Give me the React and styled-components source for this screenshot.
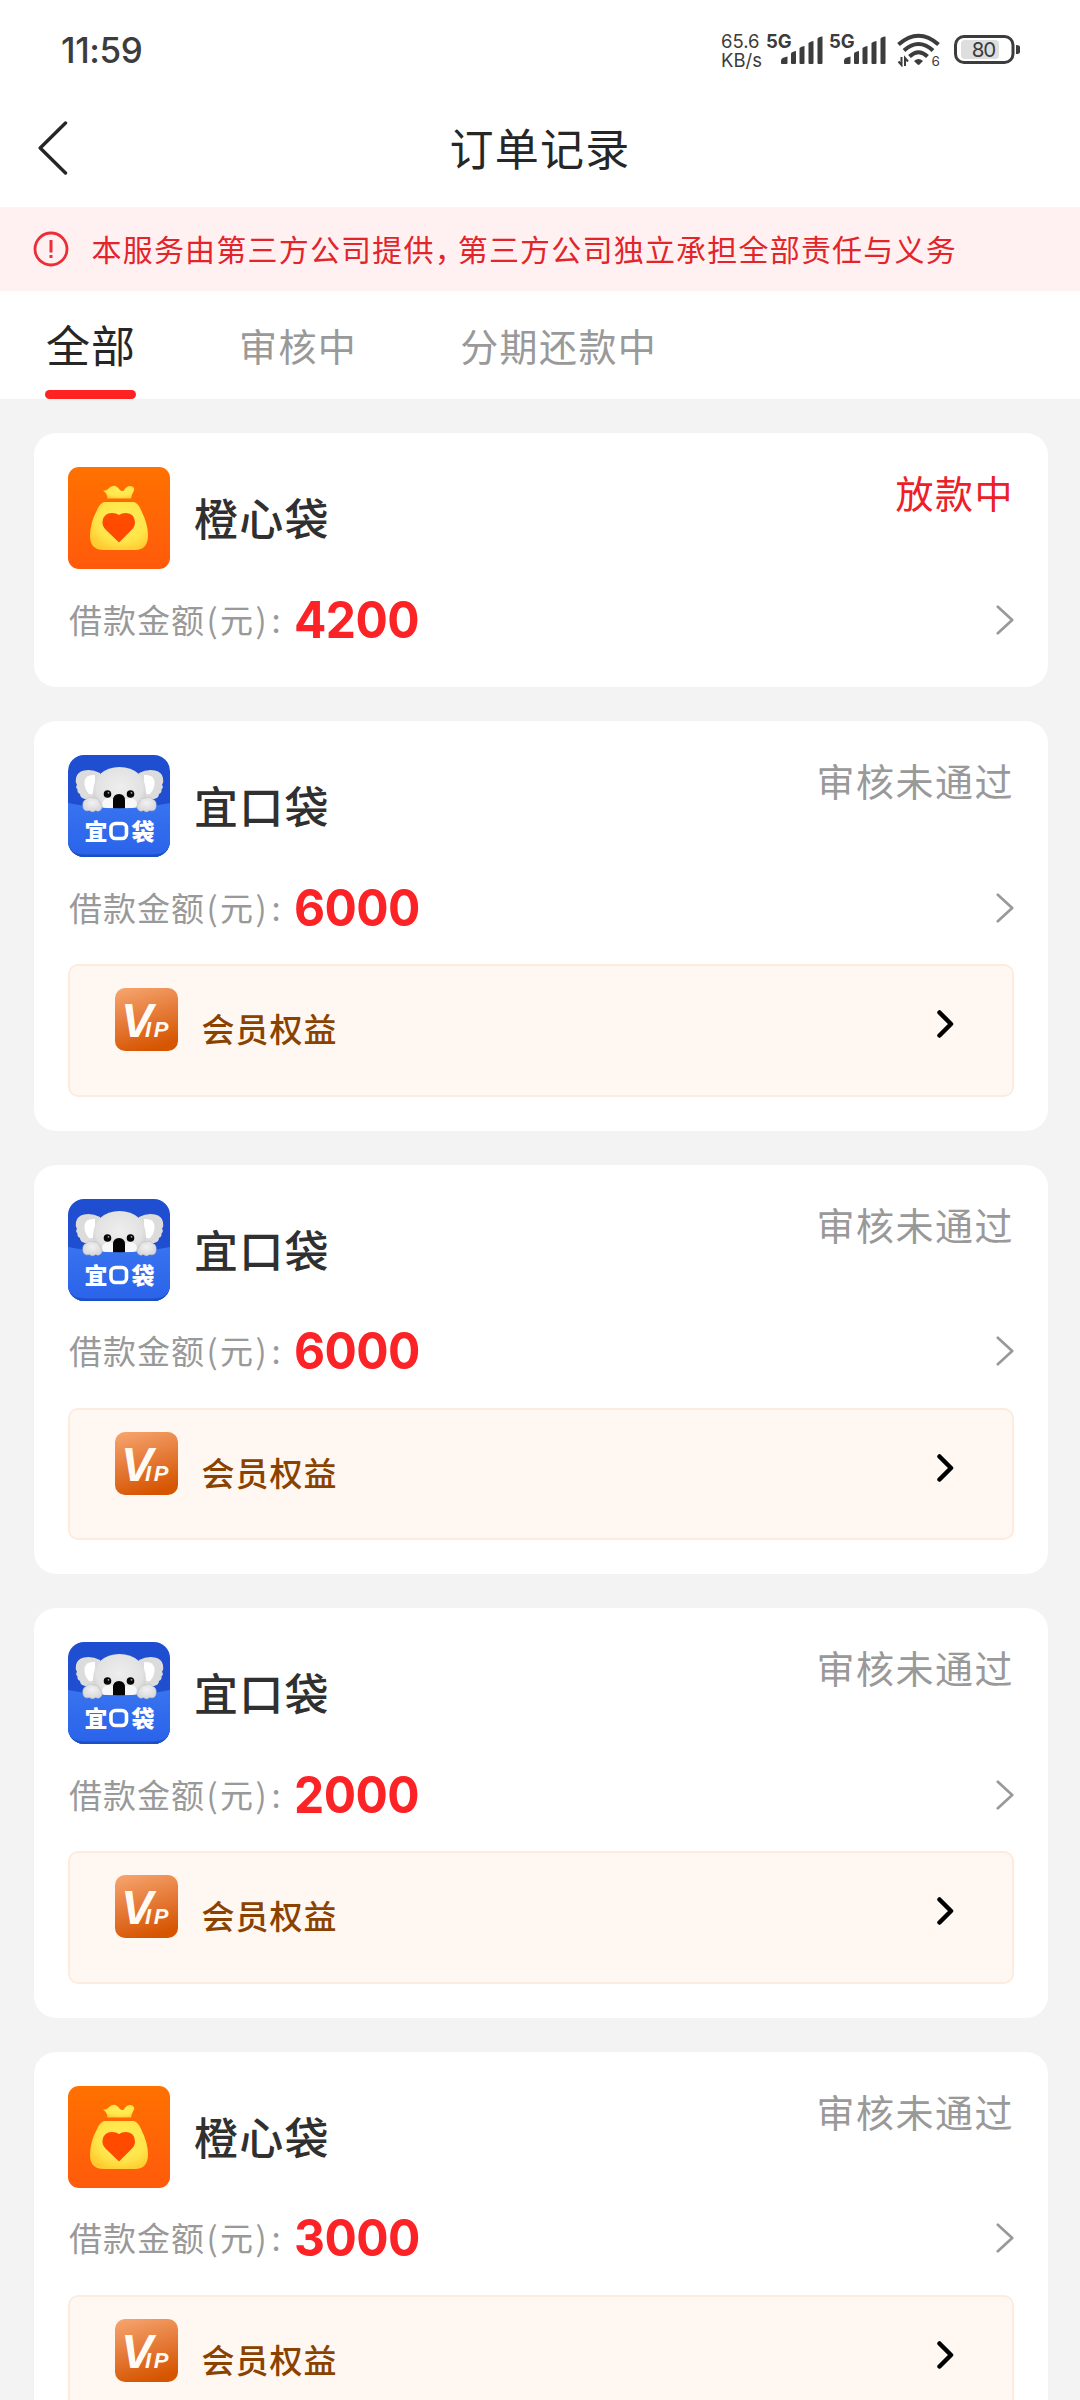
import React, { useState } from "react";
import styled, { createGlobalStyle } from "styled-components";

const tabs = ["全部", "审核中", "分期还款中"];

const orders = [
  { id: 1, app: "orange", name: "橙心袋", status: "放款中", active: true, amount: 4200, vip: false },
  { id: 2, app: "koala", name: "宜口袋", status: "审核未通过", amount: 6000, vip: true },
  { id: 3, app: "koala", name: "宜口袋", status: "审核未通过", amount: 6000, vip: true },
  { id: 4, app: "koala", name: "宜口袋", status: "审核未通过", amount: 2000, vip: true },
  { id: 5, app: "orange", name: "橙心袋", status: "审核未通过", amount: 3000, vip: true },
];

const SignalIcon = () => (
  <svg width="43" height="28" viewBox="0 0 43 28" fill="#3c3c3c">
    <path d="M0 27v-2.500q0-3 6.500-4v6.500q0 1-1 1h-4.500q-1 0-1-1z" />
    <path d="M10 17.500q0-1.500 5-2.500v12q0 1-1 1h-3q-1 0-1-1z" />
    <path d="M18.500 12.500q0-1.500 5-2.500v17q0 1-1 1h-3q-1 0-1-1z" />
    <path d="M27.500 7.500q0-1.500 5-2.500v22q0 1-1 1h-3q-1 0-1-1z" />
    <path d="M36.500 3q0-2 5-2.500v26.500q0 1-1 1h-3q-1 0-1-1z" />
  </svg>
);

const WifiIcon = () => (
  <svg width="44" height="34" viewBox="0 0 44 34" fill="none" stroke="#3c3c3c">
    <path d="M1.500 11.500q20-17.500 40 0" strokeWidth="4" />
    <path d="M7 17.500q14.500-13 29 0" strokeWidth="4" />
    <path d="M12.500 23.500q9-8.500 18 0" strokeWidth="4" />
    <path d="M17 28q4.500-4 9 0l-3.500 3.500q-1 .8-2 0z" fill="#3c3c3c" stroke="none" />
    <path d="M4.500 24v8l-3-3.500M8 33v-8l3 3.500" strokeWidth="2" />
    <text x="34.500" y="32.500" fontSize="13.500" fontFamily="Inter, sans-serif" fill="#3c3c3c" stroke="none">6</text>
  </svg>
);

const BatteryIcon = () => (
  <svg width="67" height="29" viewBox="0 0 67 29">
    <rect x="1.500" y="1.500" width="57.500" height="26" rx="8.500" fill="none" stroke="#3c3c3c" strokeWidth="3" />
    <rect x="7" y="5" width="38" height="19" rx="4" fill="#dedede" />
    <path d="M62 10q4 0 4 2v5q0 2-4 2z" fill="#3c3c3c" />
    <text x="29.500" y="22" textAnchor="middle" fontSize="20.500" letterSpacing="-1" fontFamily="Inter, sans-serif" fill="#3c3c3c">80</text>
  </svg>
);

const BackIcon = () => (
  <svg width="30" height="54" viewBox="0 0 30 54" fill="none" stroke="#262626" strokeWidth="3.400" strokeLinecap="round" strokeLinejoin="round">
    <path d="M27.500 2L2.200 27L27.500 52" />
  </svg>
);

const NoticeIcon = () => (
  <svg width="36" height="36" viewBox="0 0 36 36" fill="none" stroke="#ec2f36">
    <circle cx="18" cy="18" r="16" strokeWidth="2.800" />
    <path d="M18 9v12.500" strokeWidth="3" />
    <path d="M18 24v3" strokeWidth="3" />
  </svg>
);

const RowArrow = () => (
  <svg width="18" height="30" viewBox="0 0 18 30" fill="none" stroke="#999" strokeWidth="2.700" strokeLinecap="round" strokeLinejoin="round">
    <path d="M1.800 1.800L16.200 15L1.800 28.200" />
  </svg>
);

const VipArrow = () => (
  <svg width="18" height="30" viewBox="0 0 18 30" fill="none" stroke="#000" strokeWidth="4.500" strokeLinecap="round" strokeLinejoin="round">
    <path d="M3.500 3.500L15 15L3.500 26.500" />
  </svg>
);

const OrangeLogo = () => (
  <svg width="102" height="102" viewBox="0 0 102 102">
    <defs>
      <linearGradient id="orangeBg" x1="0" y1="0" x2="0" y2="1">
        <stop offset="0" stopColor="#ff7100" />
        <stop offset="1" stopColor="#ff5a0c" />
      </linearGradient>
      <radialGradient id="orangeBag" cx="0.55" cy="0.4" r="0.65">
        <stop offset="0" stopColor="#fff05a" />
        <stop offset="0.65" stopColor="#ffe54a" />
        <stop offset="1" stopColor="#ffcb30" />
      </radialGradient>
    </defs>
    <rect width="102" height="102" rx="11" fill="url(#orangeBg)" />
    <path d="M35 23.500Q38 24 40 22Q44 18 47.500 19Q50 20 51.500 22.500Q53 24.500 55.500 24Q57.500 20 61 19Q64.500 18.500 66 21Q67 23 65 25.500Q63.500 28 63 31.500H39.500Q39.500 27 35 23.500Z" fill="url(#orangeBag)" />
    <path d="M36 35H66Q70 36 73 43Q80 57 80 68Q80 83 67 83H36Q22 83 22 69Q22 56 29 43Q32 36 36 35Z" fill="url(#orangeBag)" />
    <path d="M51 75.500L38 63Q34 59 34.500 54.500Q35.500 46 44 46Q48.500 46.200 51 48Q53.500 46.200 58 46Q66.500 46.500 67 55Q67 59.500 64 62.500Z" fill="#ff4a00" />
  </svg>
);

const KoalaLogo = () => (
  <svg width="102" height="102" viewBox="0 0 102 102">
    <defs>
      <linearGradient id="koalaFront" x1="0" y1="0" x2="0" y2="1">
        <stop offset="0" stopColor="#3873ef" />
        <stop offset="1" stopColor="#2a63ea" />
      </linearGradient>
      <radialGradient id="koalaFace" cx="0.5" cy="0.45" r="0.62">
        <stop offset="0" stopColor="#eeeeee" />
        <stop offset="0.7" stopColor="#e2e2e2" />
        <stop offset="1" stopColor="#c6c6c8" />
      </radialGradient>
      <radialGradient id="koalaHand" cx="0.5" cy="0.4" r="0.6">
        <stop offset="0" stopColor="#f2f2f2" />
        <stop offset="1" stopColor="#d6d6da" />
      </radialGradient>
      <clipPath id="koalaClip">
        <rect width="102" height="102" rx="16" />
      </clipPath>
    </defs>
    <g clipPath="url(#koalaClip)">
      <rect width="102" height="102" fill="#1f4ed1" />
      <path d="M32 18Q24 14 16 15.500Q9 17 8 23Q7 27 9 30Q7 32 9.500 34.500Q9 37.500 12 39Q12 43 17 44H34Z" fill="#dcdcdc" />
      <path d="M71 18Q79 14 87 15.500Q94 17 95 23Q96 27 94 30Q96 32 93.500 34.500Q94 37.500 91 39Q91 43 86 44H69Z" fill="#dcdcdc" />
      <path d="M27 20Q18 19 16.500 26Q16 34 21 39Q25 40 27 36Z" fill="#fff" />
      <path d="M76 20Q85 19 86.500 26Q87 34 82 39Q78 40 76 36Z" fill="#fff" />
      <path d="M25 38Q25 26 32 19Q40 12 51.500 12Q63 12 71 19Q78 26 78 38Q78 50 70 56H33Q25 50 25 38Z" fill="url(#koalaFace)" />
      <ellipse cx="41" cy="49" rx="7" ry="6" fill="#f8f8f8" />
      <ellipse cx="62" cy="49" rx="7" ry="6" fill="#f8f8f8" />
      <circle cx="39.500" cy="39" r="3.800" fill="#080808" />
      <circle cx="62.500" cy="39" r="3.800" fill="#080808" />
      <circle cx="40.500" cy="37.800" r="0.900" fill="#aaa" />
      <circle cx="63.500" cy="37.800" r="0.900" fill="#aaa" />
      <path d="M45 55V45.500Q45 39 51 39Q57 39 57 45.500V55Z" fill="#050505" />
      <path d="M0 48Q51 58.500 102 48V102H0Z" fill="url(#koalaFront)" />
      <path d="M0 88Q2 99.500 17 99.500H85Q100 99.500 102 88V102H0Z" fill="#1d4fc4" />
      <g fill="url(#koalaHand)" stroke="#bfc0c6" strokeWidth="0.600">
        <path d="M15 52Q14 46 18 44.500Q21 40.500 25 43Q30 42.500 31.500 47Q35 50 33.500 54Q31 57.500 27.500 55.500Q24.500 58 21.500 55.500Q16 57 15 52Z" />
        <path d="M88 52Q89 46 85 44.500Q82 40.500 78 43Q73 42.500 71.500 47Q68 50 69.500 54Q72 57.500 75.500 55.500Q78.500 58 81.500 55.500Q87 57 88 52Z" />
      </g>
      <g fontFamily="'Noto Sans CJK SC', sans-serif" fontWeight="900" fontSize="23" fill="#fff" textAnchor="middle">
        <text x="28" y="85">宜</text>
        <text x="75" y="85">袋</text>
      </g>
      <rect x="43" y="68.500" width="15.500" height="15" rx="4.500" fill="none" stroke="#fff" strokeWidth="3.600" />
    </g>
  </svg>
);

const VipLogo = () => (
  <svg width="63" height="63" viewBox="0 0 63 63">
    <defs>
      <linearGradient id="vipBg" x1="0.2" y1="0" x2="0.5" y2="1">
        <stop offset="0" stopColor="#f5a26b" />
        <stop offset="0.5" stopColor="#e57a38" />
        <stop offset="1" stopColor="#d65500" />
      </linearGradient>
    </defs>
    <rect width="63" height="63" rx="10" fill="url(#vipBg)" />
    <text x="6" y="48.500" fontSize="48" fontFamily="'Liberation Sans', sans-serif" fontWeight="700" fontStyle="italic" fill="#fffaf4">
      V<tspan dx="-8" fontSize="22" letterSpacing="2.500">IP</tspan>
    </text>
  </svg>
);

const App = () => {
  const [tab, setTab] = useState(0);

  return (
    <Page>
      <GlobalStyle />
      <StatusBar>
        <Clock>11:59</Clock>
        <Indicators>
          <NetSpeed>
            <span>65.6</span>
            <span>KB/s</span>
          </NetSpeed>
          <Signal>
            <Network>5G</Network>
            <SignalIcon />
          </Signal>
          <Signal>
            <Network>5G</Network>
            <SignalIcon />
          </Signal>
          <WifiWrap>
            <WifiIcon />
          </WifiWrap>
          <BatteryWrap>
            <BatteryIcon />
          </BatteryWrap>
        </Indicators>
      </StatusBar>

      <Header>
        <BackButton aria-label="返回">
          <BackIcon />
        </BackButton>
        <Title>订单记录</Title>
      </Header>

      <Notice>
        <NoticeIcon />
        <NoticeText>
          本服务由第三方公司提供<Comma>，</Comma>第三方公司独立承担全部责任与义务
        </NoticeText>
      </Notice>

      <Tabs>
        {tabs.map((label, i) => (
          <Tab key={label} $active={i === tab} onClick={() => setTab(i)}>
            {label}
          </Tab>
        ))}
      </Tabs>

      <OrderList>
        {orders.map((order) => (
          <Card key={order.id}>
            <CardHead>
              {order.app === "koala" ? <KoalaLogo /> : <OrangeLogo />}
              <AppName>{order.name}</AppName>
              <OrderStatus $active={order.active}>{order.status}</OrderStatus>
            </CardHead>
            <AmountRow>
              <AmountLabel>
                借款金额<Punct>(</Punct>元<Punct>)</Punct><Punct>:</Punct>
              </AmountLabel>
              <Amount>{order.amount}</Amount>
              <RowArrow />
            </AmountRow>
            {order.vip && (
              <VipBox>
                <VipLogo />
                <VipText>会员权益</VipText>
                <VipArrowWrap>
                  <VipArrow />
                </VipArrowWrap>
              </VipBox>
            )}
          </Card>
        ))}
      </OrderList>
    </Page>
  );
};

const GlobalStyle = createGlobalStyle`
  * {
    box-sizing: border-box;
  }
  body {
    margin: 0;
    background: #f3f3f3;
  }
  svg {
    display: block;
    flex-shrink: 0;
  }
`;

const Page = styled.div`
  display: flex;
  flex-direction: column;
  width: 1080px;
  height: 2400px;
  overflow: hidden;
  background: #f3f3f3;
  color: #303030;
  font-family: "Noto Sans CJK SC", sans-serif;
  white-space: nowrap;
`;

const StatusBar = styled.div`
  display: flex;
  justify-content: space-between;
  flex-shrink: 0;
  height: 90px;
  padding: 32px 59px 0 61px;
  background: #fff;
  color: #3c3c3c;
  font-family: Inter, sans-serif;
`;

const Clock = styled.div`
  font-size: 35px;
  line-height: 37px;
  font-weight: 500;
  letter-spacing: -0.4px;
`;

const Indicators = styled.div`
  display: flex;
  align-items: flex-start;
`;

const NetSpeed = styled.div`
  display: flex;
  flex-direction: column;
  width: 45px;
  font-size: 18.5px;
  line-height: 18.5px;
`;

const Signal = styled.div`
  display: flex;
  width: 63px;

  svg {
    margin: 4px 0 0 -11px;
  }
`;

const Network = styled.span`
  font-size: 18.5px;
  line-height: 18px;
  font-weight: 700;
`;

const WifiWrap = styled.div`
  margin: 1px 0 0 5px;
`;

const BatteryWrap = styled.div`
  margin: 3px 0 0 13px;
`;

const Header = styled.div`
  display: grid;
  grid-template-columns: 160px 1fr 160px;
  align-items: center;
  flex-shrink: 0;
  height: 117px;
  padding-bottom: 2px;
  background: #fff;
`;

const BackButton = styled.button`
  display: flex;
  padding: 0 0 0 38px;
  border: none;
  background: none;
`;

const Title = styled.h1`
  margin: 0;
  padding-bottom: 2px;
  text-align: center;
  font-size: 44px;
  line-height: 60px;
  font-weight: 400;
  letter-spacing: 1.2px;
  color: #262626;
`;

const Notice = styled.div`
  display: flex;
  align-items: center;
  flex-shrink: 0;
  height: 84px;
  padding-left: 33px;
  background: #fff1f1;
`;

const NoticeText = styled.p`
  margin: 0 0 0 22.5px;
  padding-bottom: 2px;
  font-size: 30px;
  line-height: 44px;
  letter-spacing: 1.2px;
  color: #e3242b;
`;

const Comma = styled.span`
  display: inline-block;
  width: 23px;
`;

const Tabs = styled.div`
  display: flex;
  gap: 103px;
  flex-shrink: 0;
  height: 108px;
  padding-left: 45px;
  background: #fff;
`;

const Tab = styled.button`
  display: flex;
  align-items: center;
  padding: 0 0 2px ${(props) => (props.$active ? "1px" : "0")};
  border: none;
  border-radius: 0;
  font-family: inherit;
  font-size: ${(props) => (props.$active ? "44px" : "38px")};
  letter-spacing: ${(props) => (props.$active ? "1px" : "1.4px")};
  color: ${(props) => (props.$active ? "#262626" : "#999")};
  background: none;
  position: relative;

  &::after {
    content: "";
    display: ${(props) => (props.$active ? "block" : "none")};
    position: absolute;
    left: 0;
    bottom: 0;
    width: 100%;
    height: 9px;
    border-radius: 5px;
    background: #ff2222;
  }
`;

const OrderList = styled.div`
  display: flex;
  flex-direction: column;
  gap: 34px;
  padding: 34px 32px 0 34px;
`;

const Card = styled.div`
  flex-shrink: 0;
  padding: 34px;
  border-radius: 22px;
  background: #fff;
`;

const CardHead = styled.div`
  display: flex;
  height: 102px;
`;

const AppName = styled.h2`
  margin: 0 0 0 24px;
  font-size: 44px;
  line-height: 100px;
  font-weight: 500;
  letter-spacing: 1.3px;
  color: #303030;
`;

const OrderStatus = styled.span`
  margin-left: auto;
  font-size: 38px;
  line-height: 49px;
  letter-spacing: 1.5px;
  color: ${(props) => (props.$active ? "#ec2027" : "#999")};
`;

const AmountRow = styled.div`
  display: flex;
  align-items: center;
  height: 67px;
  margin-top: 17px;

  svg {
    margin-left: auto;
  }
`;

const AmountLabel = styled.span`
  width: 226px;
  padding: 0 0 2px 1px;
  font-size: 33px;
  letter-spacing: 1px;
  color: #999;
`;

const Punct = styled.span`
  display: inline-block;
  width: 15px;
  text-align: center;
`;

const Amount = styled.span`
  font-family: Inter, sans-serif;
  font-size: 51px;
  line-height: 60px;
  font-weight: 700;
  letter-spacing: -0.6px;
  color: #fb2326;
  transform: scaleX(0.94);
  transform-origin: left center;
`;

const VipBox = styled.div`
  display: flex;
  align-items: flex-start;
  height: 132.500px;
  margin-top: 23px;
  padding: 22px 58px 0 45px;
  border: 2px solid #fcece0;
  border-radius: 10px;
  background: #fff7f1;
`;

const VipText = styled.span`
  margin: 16px 0 0 23.5px;
  font-size: 33px;
  line-height: 49px;
  font-weight: 500;
  letter-spacing: 1px;
  color: #8a4200;
`;

const VipArrowWrap = styled.div`
  margin: 21px 0 0 auto;
`;

export default App;
